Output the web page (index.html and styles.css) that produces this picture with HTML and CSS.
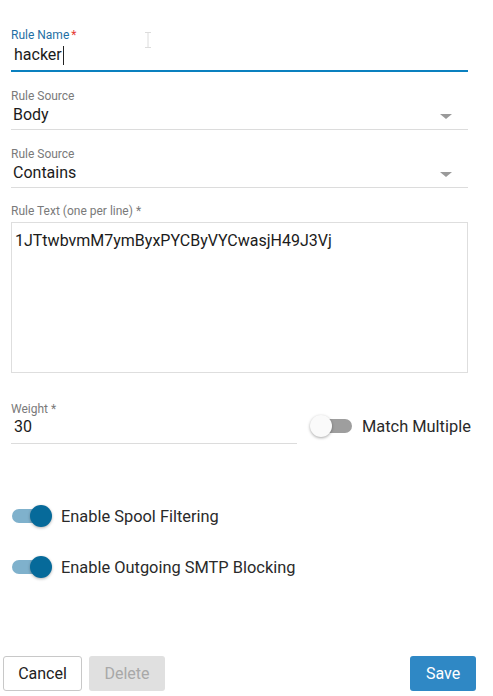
FILE: index.html
```html
<!DOCTYPE html>
<html>
<head>
<meta charset="utf-8">
<link rel="stylesheet" href="styles.css">
</head>
<body>
<div class="form">
  <div class="field field-name">
    <label class="label focused">Rule Name<span class="req">*</span></label>
    <div class="input focus"><span>hacker</span><span class="caret"></span></div>
    <svg class="ibeam" width="8" height="16" viewBox="0 0 8 16"><path d="M1 0.5h6M4 0.5v15M1 15.5h6" stroke="#dcdcdc" stroke-width="1" fill="none"/></svg>
  </div>
  <div class="field field-select">
    <label class="label">Rule Source</label>
    <div class="input select"><span>Body</span><span class="arrow"></span></div>
  </div>
  <div class="field field-select">
    <label class="label">Rule Source</label>
    <div class="input select"><span>Contains</span><span class="arrow"></span></div>
  </div>
  <div class="field field-text">
    <label class="label">Rule Text (one per line) *</label>
    <div class="textarea">1JTtwbvmM7ymByxPYCByVYCwasjH49J3Vj</div>
  </div>
  <div class="row-weight">
    <div class="field field-weight">
      <label class="label">Weight *</label>
      <div class="input"><span>30</span></div>
    </div>
    <div class="toggle">
      <span class="switch off"><span class="track"></span><span class="thumb"></span></span>
      <span class="toggle-text">Match Multiple</span>
    </div>
  </div>
  <div class="toggle toggle-spool">
    <span class="switch on"><span class="track"></span><span class="thumb"></span></span>
    <span class="toggle-text">Enable Spool Filtering</span>
  </div>
  <div class="toggle toggle-smtp">
    <span class="switch on"><span class="track"></span><span class="thumb"></span></span>
    <span class="toggle-text">Enable Outgoing SMTP Blocking</span>
  </div>
  <div class="actions">
    <button class="btn cancel">Cancel</button>
    <button class="btn delete">Delete</button>
    <span class="spacer"></span>
    <button class="btn save">Save</button>
  </div>
</div>
</body>
</html>
```
FILE: styles.css
```css
html, body {
  margin: 0;
  padding: 0;
  background: #fff;
}
body {
  font-family: Roboto, "Liberation Sans", sans-serif;
  color: #222;
  width: 493px;
  height: 696px;
  overflow: hidden;
}
.form {
  display: flex;
  flex-direction: column;
  padding: 28px 25px 0 11px;
}
.field {
  display: flex;
  flex-direction: column;
}
.field-name {
  position: relative;
}
.ibeam {
  position: absolute;
  left: 133px;
  top: 4px;
}
.label {
  font-size: 12px;
  line-height: 14px;
  color: #7a7a7a;
}
.label.focused {
  color: #1f6fa4;
}
.req {
  color: #e53935;
  margin-left: 2px;
}
.input {
  display: flex;
  align-items: center;
  font-size: 16px;
  line-height: 20px;
  color: #1b1b1b;
  padding: 2px 2px 4px 2px;
  border-bottom: 1px solid #dcdcdc;
}
.input.focus {
  border-bottom: 2px solid #0a80bf;
  padding: 3px 3px 5px 3px;
}
.caret {
  display: inline-block;
  width: 1px;
  height: 19px;
  background: #222;
  margin-left: 1px;
}
.field-select {
  margin-top: 17px;
}
.select {
  justify-content: space-between;
}
.arrow {
  width: 0;
  height: 0;
  border-left: 6px solid transparent;
  border-right: 6px solid transparent;
  border-top: 5px solid #9a9a9a;
  margin-right: 14px;
  margin-top: 2px;
}
.field-text {
  margin-top: 16px;
}
.textarea {
  margin-top: 4px;
  height: 141px;
  border: 1px solid #dedede;
  padding: 8px 3px 0 3px;
  font-size: 16px;
  line-height: 20px;
  color: #1b1b1b;
}
.row-weight {
  display: flex;
  align-items: flex-end;
  margin-top: 29px;
}
.field-weight {
  width: 286px;
  flex: none;
}
.field-weight .input {
  padding: 1px 3px 6px 3px;
}
.toggle {
  display: flex;
  align-items: center;
  white-space: nowrap;
}
.row-weight .toggle {
  margin-left: 13px;
  margin-bottom: 6px;
}
.switch {
  position: relative;
  width: 42px;
  height: 24px;
  display: inline-block;
  flex: none;
}
.track {
  position: absolute;
  left: 0;
  right: 0;
  top: 5px;
  height: 14px;
  border-radius: 7px;
}
.thumb {
  position: absolute;
  top: 1px;
  width: 22px;
  height: 22px;
  border-radius: 50%;
}
.switch.off .track {
  left: 8px;
  background: #9e9e9e;
}
.switch.off .thumb {
  left: 0;
  background: #fafafa;
  box-shadow: 0 1px 3px rgba(0,0,0,0.35);
}
.switch.on .track {
  background: #7fb1cc;
  right: 6px;
}
.switch.on .thumb {
  left: 18px;
  background: #066a9a;
  box-shadow: 0 1px 3px rgba(0,0,0,0.3);
}
.toggle-text {
  font-size: 16.4px;
  color: #2a2a2a;
  margin-left: 7px;
}
.row-weight .toggle-text {
  margin-left: 10px;
}
.toggle-spool {
  margin-top: 60px;
  margin-left: 1px;
}
.toggle-smtp {
  margin-top: 27px;
  margin-left: 1px;
}
.actions {
  display: flex;
  align-items: center;
  margin-top: 77px;
  margin-left: -8px;
  margin-right: -8px;
}
.spacer {
  flex: 1;
}
.btn {
  font-family: Roboto, "Liberation Sans", sans-serif;
  font-size: 16px;
  height: 35px;
  border-radius: 3px;
  padding: 0;
}
.cancel {
  width: 79px;
  background: #fff;
  border: 1px solid #c8c8c8;
  color: #222;
}
.delete {
  width: 76px;
  margin-left: 7px;
  background: #e0e0e0;
  border: none;
  color: #a8a8a8;
}
.save {
  width: 66px;
  background: #2f88c5;
  border: none;
  color: #fff;
}
```
